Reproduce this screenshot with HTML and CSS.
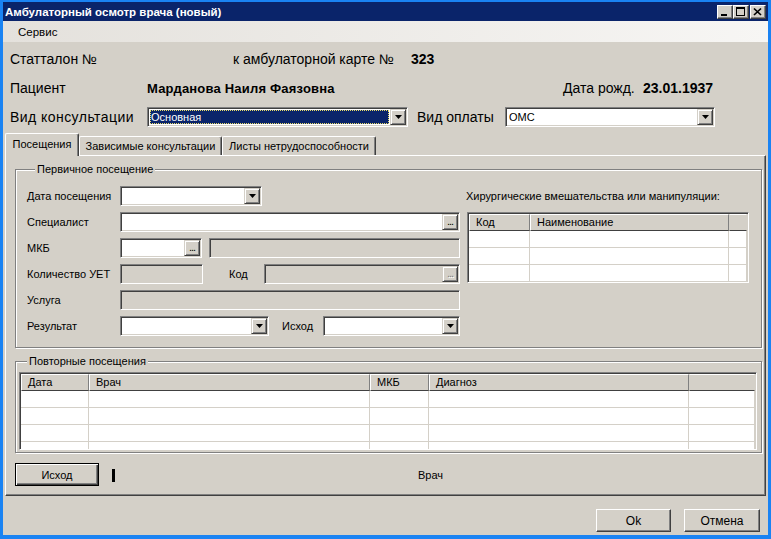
FILE: index.html
```html
<!DOCTYPE html>
<html lang="ru">
<head>
<meta charset="utf-8">
<title>Амбулаторный осмотр врача (новый)</title>
<link rel="stylesheet" href="styles.css">
</head>
<body>
<div class="window">
  <div class="titlebar">
    <span class="title">Амбулаторный осмотр врача (новый)</span>
    <div class="tb-buttons">
      <span class="tb-btn"><svg width="14" height="12" viewBox="0 0 14 12"><rect x="3" y="8" width="6" height="2" fill="#000"/></svg></span>
      <span class="tb-btn"><svg width="14" height="12" viewBox="0 0 14 12"><path d="M2 1h9v9H2z M3 3v6h7V3z" fill="#000" fill-rule="evenodd"/></svg></span>
      <span class="tb-btn tb-close"><svg width="14" height="12" viewBox="0 0 14 12"><path d="M3 2.5l7 6.5M10 2.5l-7 6.5" stroke="#000" stroke-width="1.7" fill="none"/></svg></span>
    </div>
  </div>
  <div class="menubar"><span class="menu-item">Сервис</span></div>
  <div class="client">
    <div class="header">
      <div class="hrow hrow-1">
        <span class="lbl-stat">Статталон №</span>
        <span class="lbl-card">к амбулаторной карте №</span>
        <span class="val">323</span>
      </div>
      <div class="hrow hrow-2">
        <span class="lbl-col1">Пациент</span>
        <span class="val lbl-name">Марданова Наиля Фаязовна</span>
        <span class="lbl-dob">Дата рожд.</span>
        <span class="val">23.01.1937</span>
      </div>
      <div class="hrow hrow-3">
        <span class="lbl-kind">Вид консультации</span>
        <div class="combo combo-kind">
          <span class="combo-text selected">Основная</span>
          <span class="dd-btn"><svg width="7" height="4" viewBox="0 0 7 4"><path d="M0 0h7L3.5 4z" fill="#000"/></svg></span>
        </div>
        <span class="lbl-pay">Вид оплаты</span>
        <div class="combo combo-pay">
          <span class="combo-text">ОМС</span>
          <span class="dd-btn"><svg width="7" height="4" viewBox="0 0 7 4"><path d="M0 0h7L3.5 4z" fill="#000"/></svg></span>
        </div>
      </div>
    </div>

    <div class="tabs">
      <span class="tab tab-active">Посещения</span>
      <span class="tab tab-2">Зависимые консультации</span>
      <span class="tab tab-3">Листы нетрудоспособности</span>
    </div>

    <div class="panel">
      <fieldset class="group group-primary">
        <legend>Первичное посещение</legend>
        <div class="primary-body">
          <div class="form">
            <div class="frow">
              <span class="flabel">Дата посещения</span>
              <div class="combo w142">
                <span class="combo-text"></span>
                <span class="dd-btn"><svg width="7" height="4" viewBox="0 0 7 4"><path d="M0 0h7L3.5 4z" fill="#000"/></svg></span>
              </div>
            </div>
            <div class="frow">
              <span class="flabel">Специалист</span>
              <div class="field w340"><span class="ell-btn">...</span></div>
            </div>
            <div class="frow">
              <span class="flabel">МКБ</span>
              <div class="field w82"><span class="ell-btn">...</span></div>
              <div class="field disabled w251 ml7"></div>
            </div>
            <div class="frow">
              <span class="flabel">Количество УЕТ</span>
              <div class="field disabled w83"></div>
              <span class="flabel-inline lbl-kod">Код</span>
              <div class="field disabled w196"><span class="ell-btn ell-disabled">...</span></div>
            </div>
            <div class="frow">
              <span class="flabel">Услуга</span>
              <div class="field disabled w340"></div>
            </div>
            <div class="frow">
              <span class="flabel">Результат</span>
              <div class="combo w149">
                <span class="combo-text"></span>
                <span class="dd-btn"><svg width="7" height="4" viewBox="0 0 7 4"><path d="M0 0h7L3.5 4z" fill="#000"/></svg></span>
              </div>
              <span class="flabel-inline lbl-ishod">Исход</span>
              <div class="combo w137">
                <span class="combo-text"></span>
                <span class="dd-btn"><svg width="7" height="4" viewBox="0 0 7 4"><path d="M0 0h7L3.5 4z" fill="#000"/></svg></span>
              </div>
            </div>
          </div>
          <div class="surg">
            <div class="surg-label">Хирургические вмешательства или манипуляции:</div>
            <div class="grid grid-surg">
              <div class="grow ghead">
                <span class="hcell">Код</span><span class="hcell">Наименование</span><span class="hcell hcell-rest"></span>
              </div>
              <div class="grow"><span class="cell"></span><span class="cell"></span><span class="cell"></span></div>
              <div class="grow"><span class="cell"></span><span class="cell"></span><span class="cell"></span></div>
              <div class="grow"><span class="cell"></span><span class="cell"></span><span class="cell"></span></div>
            </div>
          </div>
        </div>
      </fieldset>

      <fieldset class="group group-repeat">
        <legend>Повторные посещения</legend>
        <div class="grid grid-visits">
          <div class="grow ghead">
            <span class="hcell">Дата</span><span class="hcell">Врач</span><span class="hcell">МКБ</span><span class="hcell">Диагноз</span><span class="hcell hcell-rest"></span>
          </div>
          <div class="grow"><span class="cell"></span><span class="cell"></span><span class="cell"></span><span class="cell"></span><span class="cell"></span></div>
          <div class="grow"><span class="cell"></span><span class="cell"></span><span class="cell"></span><span class="cell"></span><span class="cell"></span></div>
          <div class="grow"><span class="cell"></span><span class="cell"></span><span class="cell"></span><span class="cell"></span><span class="cell"></span></div>
          <div class="grow"><span class="cell"></span><span class="cell"></span><span class="cell"></span><span class="cell"></span><span class="cell"></span></div>
        </div>
      </fieldset>

      <div class="panel-bottom">
        <span class="btn btn-default btn-ishod">Исход</span>
        <span class="bar"></span>
        <span class="lbl-doctor">Врач</span>
      </div>
    </div>

    <div class="footer">
      <span class="btn btn-ok">Ok</span>
      <span class="btn btn-cancel">Отмена</span>
    </div>
  </div>
</div>
</body>
</html>
```

FILE: styles.css
```css
* { box-sizing: border-box; }
html, body { margin: 0; padding: 0; }
body {
  background: #1a83f3;
  font-family: "Liberation Sans", Arial, sans-serif;
  font-size: 11px;
  color: #000;
}

.window {
  width: 771px;
  height: 539px;
  padding: 2px 3px 4px 3px;
  display: flex;
  flex-direction: column;
}

/* title bar */
.titlebar {
  height: 19px;
  background: #0a246a;
  display: flex;
  align-items: center;
  justify-content: space-between;
  padding: 0 2px 0 2px;
  flex: none;
}
.title { color: #fff; font-weight: bold; font-size: 11.5px; }
.tb-buttons { display: flex; }
.tb-btn {
  width: 16px;
  height: 14px;
  background: #d4d0c8;
  border: 1px solid;
  border-color: #fff #404040 #404040 #fff;
  box-shadow: inset -1px -1px #808080;
  display: flex;
  align-items: center;
  justify-content: center;
}
.tb-close { margin-left: 1px; }

/* menu */
.menubar {
  height: 21px;
  flex: none;
  background: linear-gradient(to right, #e4e1dc, #f7f6f4);
  display: flex;
  align-items: center;
  padding-left: 15px;
}
.menu-item { font-size: 11.5px; }

.client {
  flex: 1;
  background: #d4d0c8;
  display: flex;
  flex-direction: column;
}

/* header area */
.header { padding: 6px 0 0 7px; }
.hrow { display: flex; align-items: center; font-size: 14px; white-space: nowrap; }
.hrow-1 { height: 22px; }
.hrow-2 { height: 22px; margin-top: 7px; }
.hrow-3 { height: 20px; margin-top: 8px; }
.val { font-weight: bold; }
.lbl-stat { width: 223px; }
.lbl-card { width: 178px; }
.lbl-col1 { width: 137px; }
.lbl-name { width: 416px; font-size: 13px; letter-spacing: 0.2px; }
.lbl-dob { width: 80px; }
.lbl-kind {
  width: 137px;
  letter-spacing: 0.45px;
}
.lbl-pay { width: 88px; margin-left: 9px; }
.combo-kind { width: 261px; }
.combo-pay { width: 210px; }

/* sunken controls */
.combo, .field {
  height: 20px;
  background: #fff;
  border: 1px solid;
  border-color: #808080 #fff #fff #808080;
  box-shadow: inset 1px 1px #404040, inset -1px -1px #d4d0c8;
  padding: 1px;
  display: flex;
  align-items: stretch;
  flex: none;
}
.field { justify-content: flex-end; }
.field.disabled { background: #d4d0c8; }
.combo-text {
  flex: 1;
  font-size: 11px;
  line-height: 16px;
  padding-left: 2px;
  white-space: nowrap;
  overflow: hidden;
}
.combo-text.selected {
  background: #0a246a;
  color: #fff;
  margin: 1px;
  line-height: 14px;
  padding-left: 1px;
  outline: 1px dotted #e8dc6a;
  outline-offset: -1px;
}
.dd-btn, .ell-btn {
  width: 16px;
  height: 16px;
  background: #d4d0c8;
  border: 1px solid;
  border-color: #d4d0c8 #404040 #404040 #d4d0c8;
  box-shadow: inset 1px 1px #fff, inset -1px -1px #808080;
  display: flex;
  align-items: center;
  justify-content: center;
  flex: none;
}
.ell-btn {
  align-items: flex-end;
  font-size: 11px;
  line-height: 11px;
  padding-bottom: 2px;
  letter-spacing: -1px;
}
.ell-disabled { color: #808080; text-shadow: 1px 1px #fff; }

/* tabs */
.tabs {
  display: flex;
  align-items: flex-end;
  height: 22px;
  margin: 6px 0 0 2px;
  flex: none;
}
.tab {
  height: 19px;
  border: 1px solid;
  border-color: #fff #404040 transparent #fff;
  border-bottom: none;
  border-radius: 2px 2px 0 0;
  box-shadow: inset -1px 0 #808080;
  font-size: 11px;
  display: flex;
  align-items: center;
  justify-content: center;
  white-space: nowrap;
}
.tab-active {
  width: 74px;
  height: 23px;
  margin-bottom: -1px;
  position: relative;
  z-index: 1;
  background: #d4d0c8;
  padding-bottom: 2px;
}
.tab-2 { width: 143px; }
.tab-3 { width: 154px; }

/* panel */
.panel {
  margin: 0 2px;
  border: 1px solid;
  border-color: #fff #404040 #404040 #fff;
  box-shadow: inset -1px -1px #808080;
  padding: 6px 3px 9px 9px;
  display: flex;
  flex-direction: column;
  flex: none;
}

.group {
  margin: 0;
  min-width: 0;
  border: 1px solid #808080;
  box-shadow: 1px 1px 0 #fff, inset 1px 1px 0 #fff;
}
.group legend {
  font-size: 11px;
  line-height: 14px;
  padding: 0 2px;
  margin-left: 8px;
  background: #d4d0c8;
}
.group-primary { padding: 10px 0 11px 11px; }
.group-repeat { margin-top: 6px; padding: 4px 4px 2px 3px; }

.primary-body { display: flex; }
.form { width: 433px; display: flex; flex-direction: column; gap: 6px; }
.frow { display: flex; align-items: center; height: 20px; }
.flabel { width: 93px; font-size: 11px; white-space: nowrap; }
.flabel-inline { font-size: 11px; white-space: nowrap; }
.lbl-kod { margin-left: 26px; width: 35px; }
.lbl-ishod { margin-left: 13px; width: 41px; }
.w82 { width: 82px; }
.w83 { width: 83px; }
.w137 { width: 137px; }
.w142 { width: 142px; }
.w149 { width: 149px; }
.w196 { width: 196px; }
.w251 { width: 251px; }
.w340 { width: 340px; }
.ml7 { margin-left: 7px; }

.surg { margin-left: 6px; width: 283px; }
.surg-label { height: 20px; line-height: 20px; font-size: 11px; white-space: nowrap; }

/* grids */
.grid {
  background: #fff;
  border: 1px solid;
  border-color: #808080 #fff #fff #808080;
  box-shadow: inset 1px 1px #404040, inset -1px -1px #d4d0c8;
  padding: 1px;
  overflow: hidden;
}
.grid-surg { margin: 6px 0 0 1px; width: 282px; height: 71px; }
.grid-visits { width: 738px; height: 78px; }
.grow { display: grid; height: 17px; }
.grid-surg .grow { grid-template-columns: 61px 199px 18px; }
.grid-visits .grow { grid-template-columns: 68px 281px 59px 260px 66px; }
.hcell {
  background: #d4d0c8;
  border: 1px solid;
  border-color: #fff #808080 #404040 #fff;
  font-size: 11px;
  line-height: 14px;
  padding-left: 6px;
  white-space: nowrap;
  overflow: hidden;
}
.hcell-rest { border-color: #fff #d4d0c8 #404040 #d4d0c8; }
.cell {
  border-right: 1px solid #d4d0c8;
  border-bottom: 1px solid #d4d0c8;
  background: #fff;
}

/* buttons */
.btn {
  display: flex;
  align-items: center;
  justify-content: center;
  background: #d4d0c8;
  font-size: 11px;
  border: 1px solid;
  border-color: #fff #404040 #404040 #fff;
  box-shadow: inset -1px -1px #808080;
  flex: none;
}
.btn-default {
  border: 1px solid #000;
  box-shadow: inset 1px 1px #fff, inset -1px -1px #404040, inset -2px -2px #808080;
}

.panel-bottom {
  display: flex;
  align-items: center;
  margin-top: 10px;
  height: 23px;
}
.btn-ishod { width: 84px; height: 23px; }
.bar { width: 3px; height: 13px; background: #000; margin-left: 13px; margin-top: 2px; }
.lbl-doctor { margin-left: 303px; font-size: 11px; }

.footer {
  flex: 1;
  display: flex;
  justify-content: flex-end;
  align-items: flex-start;
  padding: 13px 8px 0 0;
}
.btn-ok, .btn-cancel { font-size: 12px; height: 23px; }
.btn-ok { width: 75px; margin-right: 13px; }
.btn-cancel { width: 76px; }
```
